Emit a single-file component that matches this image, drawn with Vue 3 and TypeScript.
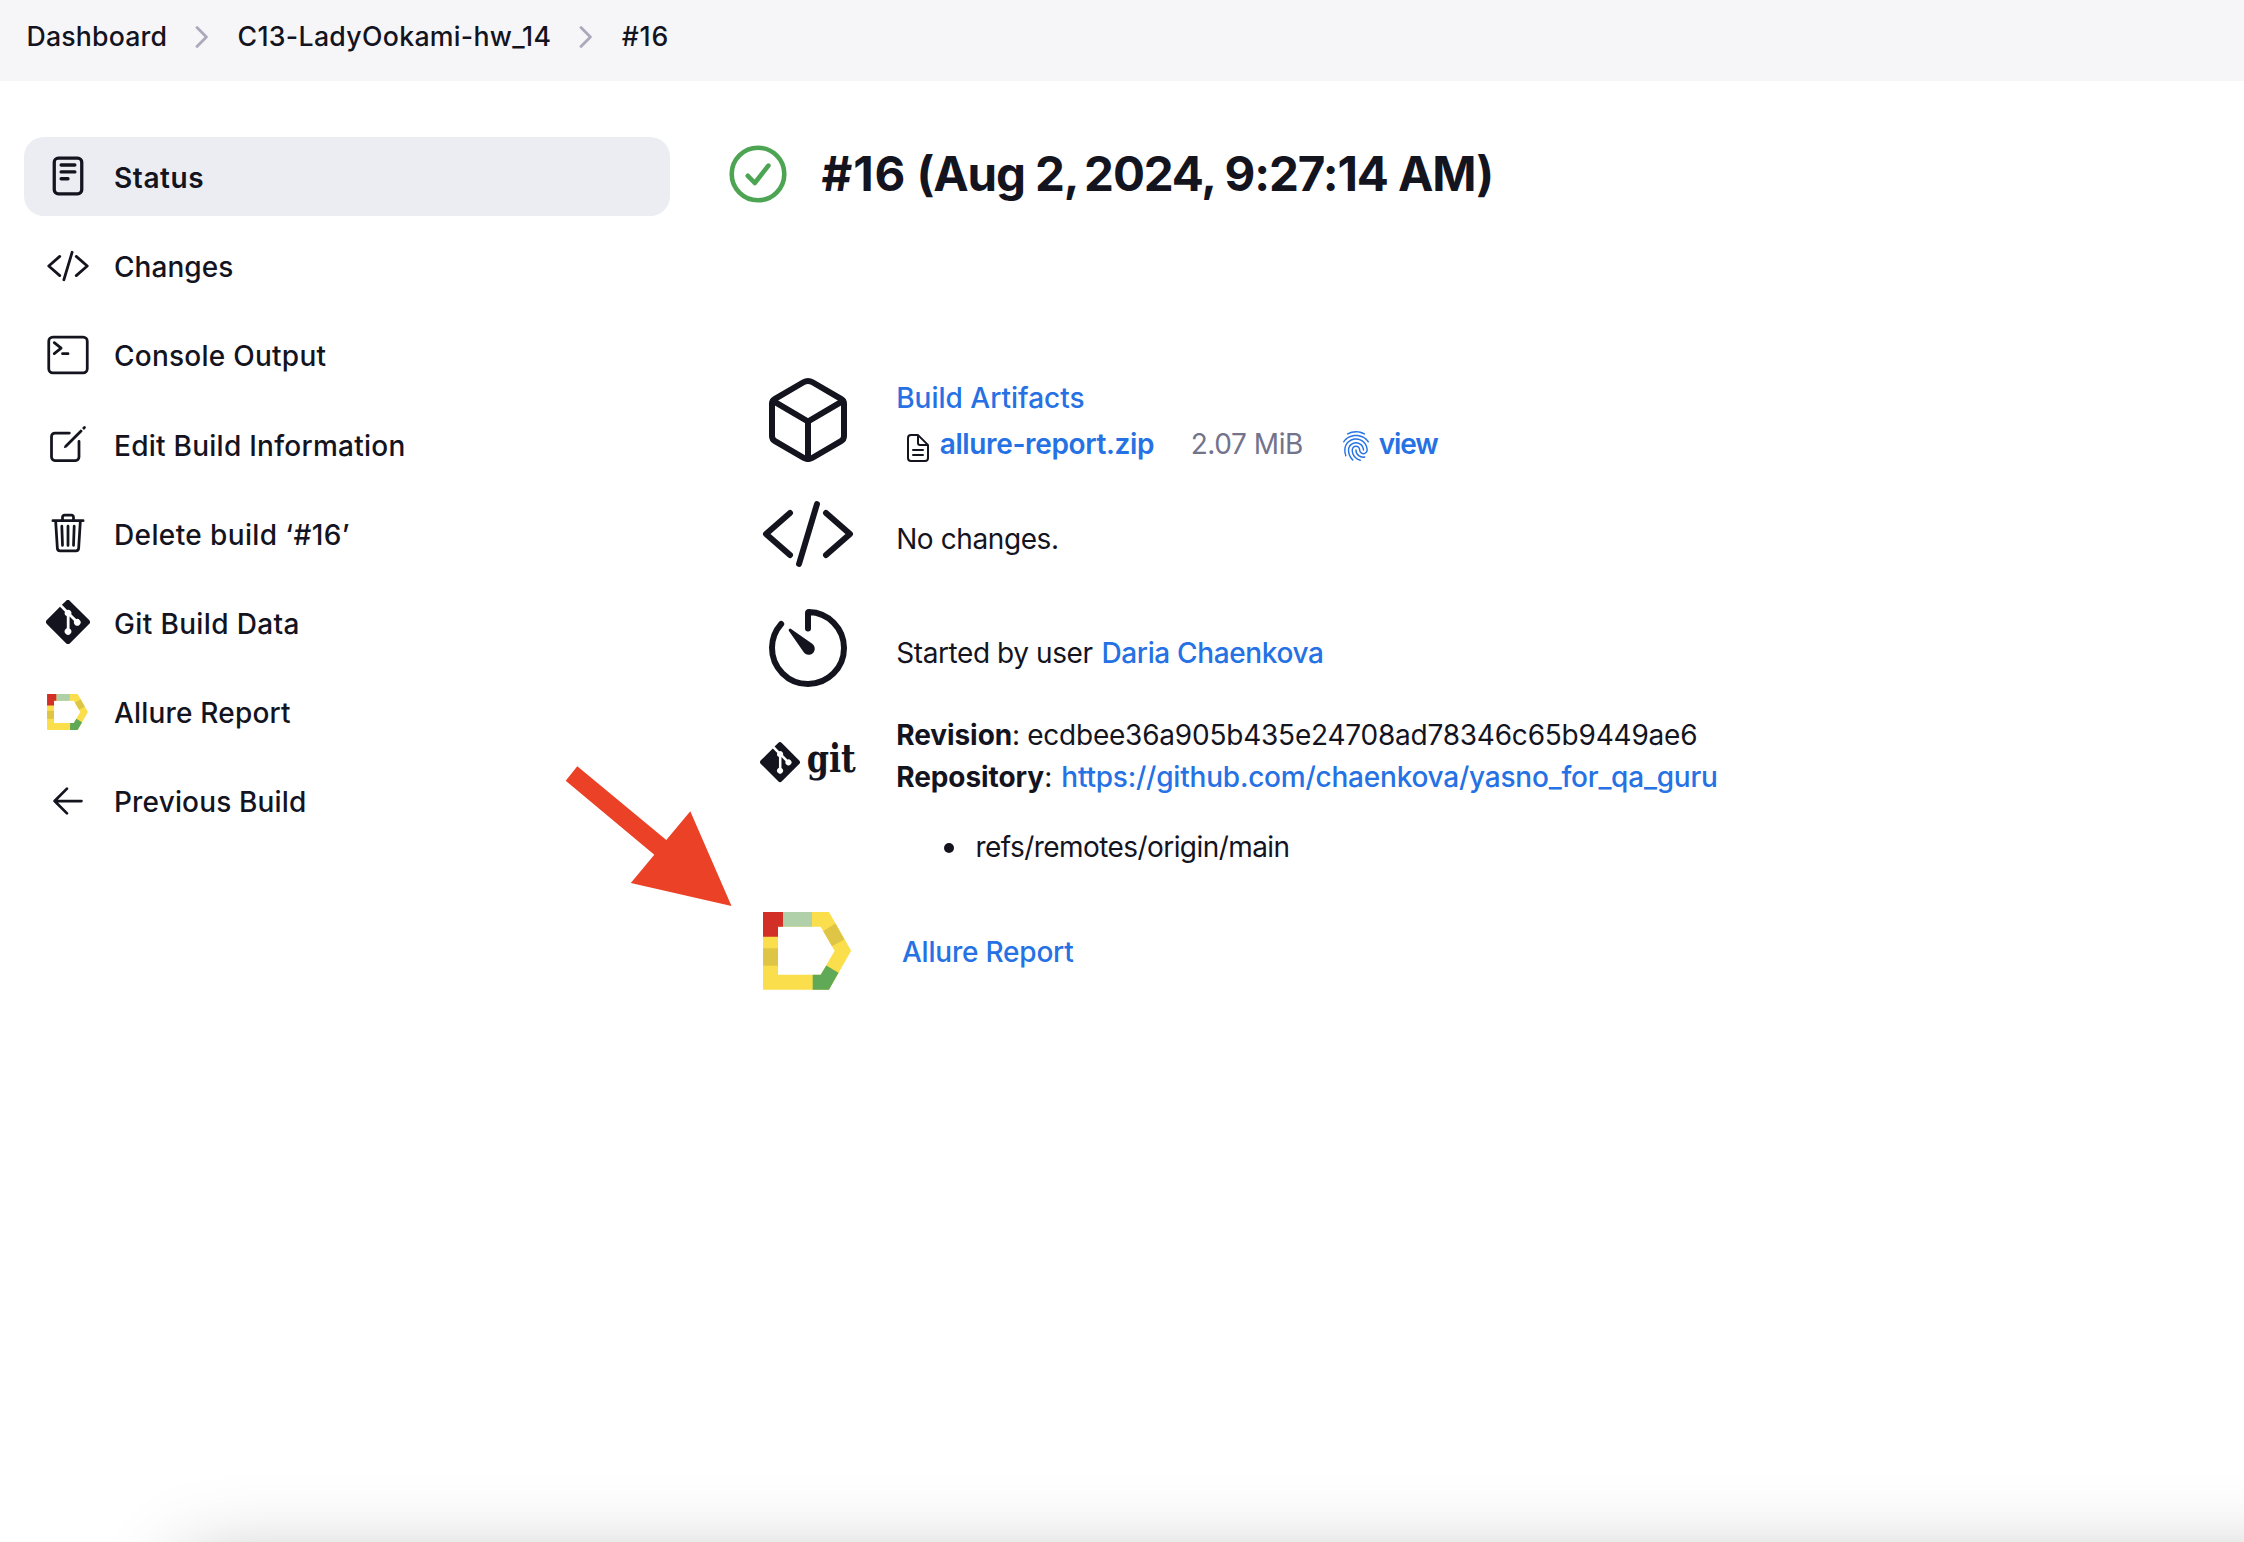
<script setup lang="ts">
interface Crumb {
  label: string
  spacing: number
}

interface Task {
  id: string
  label: string
  spacing: number
  active?: boolean
}

const crumbs: Crumb[] = [
  { label: 'Dashboard', spacing: 0.16 },
  { label: 'C13-LadyOokami-hw_14', spacing: 0.3 },
  { label: '#16', spacing: 0.9 },
]

const tasks: Task[] = [
  { id: 'status', label: 'Status', spacing: 0.6, active: true },
  { id: 'changes', label: 'Changes', spacing: 0.06 },
  { id: 'console', label: 'Console Output', spacing: 0.25 },
  { id: 'edit', label: 'Edit Build Information', spacing: 0.26 },
  { id: 'delete', label: 'Delete build ‘#16’', spacing: 0.38 },
  { id: 'git', label: 'Git Build Data', spacing: 0.36 },
  { id: 'allure', label: 'Allure Report', spacing: 0.19 },
  { id: 'previous', label: 'Previous Build', spacing: 0.16 },
]

const gitMark =
  'M90.156 41.965 50.036 1.848a5.918 5.918 0 0 0-8.372 0l-8.328 8.332 10.566 10.566a7.03 7.03 0 0 1 7.23 1.684 7.034 7.034 0 0 1 1.669 7.277l10.187 10.184a7.028 7.028 0 0 1 7.278 1.672 7.04 7.04 0 0 1 0 9.957 7.05 7.05 0 0 1-9.965 0 7.044 7.044 0 0 1-1.528-7.66l-9.5-9.497V59.36a7.04 7.04 0 0 1 1.86 11.29 7.04 7.04 0 0 1-9.957 0 7.04 7.04 0 0 1 0-9.958 7.06 7.06 0 0 1 2.304-1.539V33.926a7.049 7.049 0 0 1-3.82-9.234L29.242 14.272 1.73 41.777a5.918 5.918 0 0 0 0 8.371L41.852 90.27a5.92 5.92 0 0 0 8.37 0l39.934-39.934a5.925 5.925 0 0 0 0-8.371'

const allureParts = [
  { points: '0,0 66,0 88.2,38.8 66,77.7 0,77.7 0,62.7 57.7,62.7 71.7,38.8 57.7,14.7 15,14.7 15,77.7 0,77.7', fill: '#fbde4b' },
  { points: '20,0 49,0 49,14.7 20,14.7', fill: '#b0d0a9' },
  { points: '0,0 20,0 20,14.7 15,14.7 15,24.7 0,24.7', fill: '#d22f27' },
  { points: '0,36.3 15,36.3 15,53.7 0,53.7', fill: '#dfc545' },
  { points: '72.5,11.5 81.5,27.5 69,34.2 60.2,19', fill: '#dfc545' },
  { points: '49.7,62.7 57.7,62.7 63.3,53.5 75.5,60.8 66,77.7 49.7,77.7', fill: '#60a957' },
]
</script>

<template>
  <div class="page">
    <nav class="breadcrumbs">
      <template v-for="(crumb, i) in crumbs" :key="crumb.label">
        <svg v-if="i > 0" class="chevron" viewBox="0 0 14 22">
          <path d="M2 1.6 L11.4 11 L2 20.4" />
        </svg>
        <a class="crumb" :style="{ letterSpacing: crumb.spacing + 'px' }">{{ crumb.label }}</a>
      </template>
    </nav>

    <div class="body">
      <aside class="tasks">
        <a v-for="task in tasks" :key="task.id" class="task" :class="{ active: task.active }">
          <svg v-if="task.id === 'git'" class="task-icon" viewBox="0 0 92 92">
            <path class="solid" :d="gitMark" />
          </svg>
          <svg v-else-if="task.id === 'allure'" class="task-icon allure-small" viewBox="0 0 88.2 77.7">
            <polygon v-for="(p, i) in allureParts" :key="i" :points="p.points" :fill="p.fill" />
          </svg>
          <svg v-else class="task-icon line" viewBox="0 0 512 512">
            <template v-if="task.id === 'status'">
              <rect x="96" y="48" width="320" height="416" rx="48" />
              <path d="M176 128h160M176 208h160M176 288h80" />
            </template>
            <path v-else-if="task.id === 'changes'" d="M160 368L32 256l128-112M352 368l128-112-128-112M304 96l-96 320" />
            <template v-else-if="task.id === 'console'">
              <rect x="32" y="48" width="448" height="416" rx="48" />
              <path d="M96 112l80 64-80 64M192 240h64" />
            </template>
            <template v-else-if="task.id === 'edit'">
              <path d="M384 224v184a40 40 0 01-40 40H104a40 40 0 01-40-40V168a40 40 0 0140-40h167.48" />
              <path
                class="solid"
                d="M459.94 53.25a16.06 16.06 0 00-23.22-.56L424.35 65a8 8 0 000 11.31l11.34 11.32a8 8 0 0011.34 0l12.06-12c6.1-6.09 6.67-16.01.85-22.38zM399.34 90L218.82 270.2a9 9 0 00-2.31 3.93L208.16 299a3.91 3.91 0 004.86 4.86l24.85-8.35a9 9 0 003.93-2.31L422 112.66a9 9 0 000-12.66l-9.95-10a9 9 0 00-12.71 0z"
              />
            </template>
            <path
              v-else-if="task.id === 'delete'"
              d="M112 112l20 320c.95 18.49 14.4 32 32 32h184c17.67 0 30.87-13.51 32-32l20-320M80 112h352M192 112V72h0a23.93 23.93 0 0124-24h80a23.93 23.93 0 0124 24h0v40M256 176v224M184 176l8 224M328 176l-8 224"
            />
            <path v-else d="M244 400L100 256l144-144M120 256h292" />
          </svg>
          <span :style="{ letterSpacing: task.spacing + 'px' }">{{ task.label }}</span>
        </a>
      </aside>

      <main class="main">
        <header class="heading">
          <svg class="result" viewBox="0 0 58 58">
            <circle cx="29" cy="29" r="26.3" />
            <path d="M18.8 30.8 L25.8 38 L39.4 20.6" />
          </svg>
          <h1><span class="build-number">#16</span> (Aug <span class="day">2,</span> 2024, 9:27:14 AM)</h1>
        </header>

        <section class="row artifacts">
          <svg class="row-icon line" viewBox="0 0 512 512">
            <path
              d="M448 341.37V170.61A32 32 0 00432.11 143l-152-88.46a47.94 47.94 0 00-48.24 0L79.89 143A32 32 0 0064 170.61v170.76A32 32 0 0079.89 369l152 88.46a48 48 0 0048.24 0l152-88.46A32 32 0 00448 341.37z"
            />
            <path d="M69 153.99l187 110 187-110M256 463.99v-200" />
          </svg>
          <div class="cell">
            <a class="link">Build Artifacts</a>
            <div class="file">
              <svg class="file-icon line" viewBox="0 0 512 512">
                <path
                  d="M416 221.25V416a48 48 0 01-48 48H144a48 48 0 01-48-48V96a48 48 0 0148-48h98.75a32 32 0 0122.62 9.37l141.26 141.26a32 32 0 019.37 22.62z"
                />
                <path d="M256 56v120a32 32 0 0032 32h120M176 288h160M176 368h160" />
              </svg>
              <a class="link strong file-name">allure-report.zip</a>
              <span class="size">2.07 MiB</span>
              <svg class="print-icon" viewBox="0 0 512 512">
                <path
                  d="M390.42 75.28a10.45 10.45 0 01-5.32-1.44C340.72 50.08 302.35 40 256.35 40c-45.77 0-89.23 11.28-128.76 33.84C122 77 115.11 74.8 111.87 69a12.4 12.4 0 014.63-16.32A281.81 281.81 0 01256.35 16c49.23 0 92.23 11.28 139.39 36.48a12 12 0 014.85 16.08 11.3 11.3 0 01-10.17 6.72zm-330.79 126a11.73 11.73 0 01-6.7-2.16 12.26 12.26 0 01-2.78-16.8c22.89-33.6 52-60 86.69-78.48 72.58-38.88 165.51-39.12 238.32-.24 34.68 18.48 63.8 44.64 86.69 78a12.29 12.29 0 01-2.78 16.8 11.26 11.26 0 01-16.18-2.88c-20.8-30.24-47.16-54-78.36-70.56-66.34-35.28-151.18-35.28-217.29.24-31.44 16.8-57.79 40.8-78.59 71a10 10 0 01-9.02 5.08zM204.1 491a10.66 10.66 0 01-8.09-3.6C175.9 466.48 165 453 149.55 424c-16-29.52-24.27-65.52-24.27-104.16 0-71.28 58.71-129.36 130.84-129.36S387 248.56 387 319.84a11.56 11.56 0 11-23.11 0c0-58.08-48.32-105.36-107.72-105.36S148.4 261.76 148.4 319.84c0 34.56 7.4 66.48 21.49 92.4 14.8 27.6 25 39.36 42.77 58.08a12.67 12.67 0 010 17 12.44 12.44 0 01-8.56 3.68zm165.75-44.4c-27.51 0-51.78-7.2-71.66-21.36a129.1 129.1 0 01-55-105.36 11.57 11.57 0 1123.12 0 104.28 104.28 0 0044.84 85.44c16.41 11.52 35.6 17 58.72 17a147.41 147.41 0 0024-2.4c6.24-1.2 12.25 3.12 13.4 9.84a11.92 11.92 0 01-9.47 13.92 152.28 152.28 0 01-27.95 2.88zM323.38 496a13 13 0 01-3-.48c-36.76-10.56-60.8-24.72-86-50.4-32.37-33.36-50.16-77.76-50.16-125.28 0-38.88 31.9-70.56 71.19-70.56s71.2 31.68 71.2 70.56c0 25.68 21.5 46.56 48.08 46.56s48.08-20.88 48.08-46.56c0-90.48-75.13-163.92-167.59-163.92-65.65 0-125.75 37.92-152.79 96.72-9 19.44-13.64 42.24-13.64 67.2 0 18.72 1.61 48.24 15.48 86.64 2.32 6.24-.69 13.2-6.7 15.36a11.34 11.34 0 01-14.79-7 276.39 276.39 0 01-16.88-95c0-28.8 5.32-55 15.72-77.76 30.75-67 98.94-110.4 173.6-110.4 105.18 0 190.71 84.24 190.71 187.92 0 38.88-31.9 70.56-71.2 70.56s-71.2-31.68-71.2-70.56c.01-25.68-21.49-46.6-48.07-46.6s-48.08 20.88-48.08 46.56c0 41 15.26 79.44 43.23 108.24 22 22.56 43 35 75.59 44.16 6.24 1.68 9.71 8.4 8.09 14.64a11.39 11.39 0 01-10.87 9.36z"
                />
              </svg>
              <a class="link strong view">view</a>
            </div>
          </div>
        </section>

        <section class="row changes">
          <svg class="row-icon line" viewBox="0 0 512 512">
            <path d="M160 368L32 256l128-112M352 368l128-112-128-112M304 96l-96 320" />
          </svg>
          <div class="cell plain">No changes.</div>
        </section>

        <section class="row cause">
          <svg class="row-icon line" viewBox="0 0 512 512">
            <path
              d="M112.91 128A191.85 191.85 0 0064 254c-1.18 106.35 85.65 193.8 192 194 106.2.2 192-85.83 192-192 0-104.54-83.55-189.61-187.5-192a4.36 4.36 0 00-4.5 4.37V152"
            />
            <path
              class="solid"
              d="M233.38 278.63l-79-113a8.13 8.13 0 0111.32-11.32l113 79a32.5 32.5 0 01-37.25 53.26 33.21 33.21 0 01-8.07-7.94z"
            />
          </svg>
          <div class="cell"><span class="plain">Started by user</span><a class="link user">Daria Chaenkova</a></div>
        </section>

        <section class="row scm">
          <svg class="git-logo" viewBox="0 0 120 72">
            <g transform="translate(0.1 12.2) scale(0.4337)"><path class="solid" :d="gitMark" /></g>
            <text x="46.8" y="41.7" textLength="49" lengthAdjust="spacingAndGlyphs">git</text>
          </svg>
          <div class="cell">
            <div class="line-text revision"><b>Revision</b>: <span class="hash">ecdbee36a905b435e24708ad78346c65b9449ae6</span></div>
            <div class="line-text"><b>Repository</b>: <a class="link url">https://github.com/chaenkova/yasno_for_qa_guru</a></div>
            <ul>
              <li>refs/remotes/origin/main</li>
            </ul>
          </div>
        </section>

        <section class="row report">
          <svg class="allure-large" viewBox="0 0 88.2 77.7">
            <polygon v-for="(p, i) in allureParts" :key="i" :points="p.points" :fill="p.fill" />
          </svg>
          <a class="link report-link">Allure Report</a>
        </section>
      </main>
    </div>

    <svg class="pointer" viewBox="0 0 170 144">
      <polygon points="14.3,2.3 103.3,76 127.3,47.3 168.5,142 67.8,119 91.3,90.7 2.7,16.7" />
    </svg>
    <div class="edge-shadow"></div>
  </div>
</template>

<style>
body {
  margin: 0;
  background: #fff;
}
</style>

<style scoped>
.page {
  position: relative;
  width: 2244px;
  height: 1542px;
  overflow: hidden;
  background: #fff;
  color: #14141f;
  font-family: Inter, 'Liberation Sans', sans-serif;
  font-size: 28px;
  line-height: 40px;
  white-space: nowrap;
}

.line path,
.line rect {
  fill: none;
  stroke: #14141f;
  stroke-width: 32;
  stroke-linecap: round;
  stroke-linejoin: round;
}

.solid,
.line path.solid {
  fill: #14141f;
  stroke: none;
}

.breadcrumbs {
  display: flex;
  align-items: center;
  box-sizing: border-box;
  height: 81px;
  padding: 0 0 9px 26.6px;
  background: #f6f6f9;
}

.crumb {
  font-size: 26.7px;
  font-weight: 500;
}

.chevron {
  width: 14px;
  height: 22px;
  margin: 1px 28.2px 0 28.2px;
}

.chevron path {
  fill: none;
  stroke: #a9a9bb;
  stroke-width: 2.8;
  stroke-linecap: round;
  stroke-linejoin: round;
}

.body {
  display: flex;
}

.tasks {
  display: flex;
  flex-direction: column;
  gap: 10.2px;
  width: 646px;
  padding: 56px 0 0 24px;
}

.task {
  display: flex;
  align-items: center;
  box-sizing: border-box;
  height: 79px;
  padding: 0 22px;
  border-radius: 20px;
  font-weight: 500;
}

.task.active {
  background: #ecedf3;
  font-weight: 600;
}

.task.active .task-icon {
  margin-bottom: 1px;
}

.task.active .line path,
.task.active .line rect {
  stroke-width: 38;
}

.task-icon {
  width: 44px;
  height: 44px;
  margin-right: 24px;
}

.task-icon.allure-small {
  width: 41px;
  height: 36px;
  margin: 0 26px 0 1px;
}

.task span {
  padding-top: 3px;
}

.main {
  padding: 62px 0 0 58px;
}

.heading {
  display: flex;
  align-items: center;
  gap: 34.5px;
  height: 62px;
}

.result {
  width: 58px;
  height: 58px;
  margin-left: 1px;
}

.result circle,
.result path {
  fill: none;
  stroke: #4da553;
  stroke-width: 4.6;
  stroke-linecap: round;
  stroke-linejoin: round;
}

h1 {
  margin: 0;
  font-size: 47.5px;
  line-height: 62px;
  font-weight: 700;
  letter-spacing: -1.13px;
}

.build-number {
  letter-spacing: 0.9px;
}

.day {
  margin-right: -4.6px;
}

.row {
  display: flex;
  align-items: flex-start;
  padding-left: 32px;
}

.row-icon {
  width: 96px;
  height: 96px;
}

.cell {
  padding-left: 40.2px;
}

.link {
  color: #2671e3;
  font-weight: 540;
}

.strong {
  font-weight: 600;
}

.artifacts {
  margin-top: 167px;
  height: 114px;
}

.artifacts .cell {
  padding-top: 6px;
}

.file {
  display: flex;
  align-items: center;
  margin-top: 5.5px;
}

.file-icon {
  width: 32px;
  height: 32px;
  margin: 8px 5.7px 0 5.8px;
}

.file-name {
  width: 251px;
  letter-spacing: -0.36px;
}

.size {
  width: 149.5px;
  color: #73738c;
  letter-spacing: -0.42px;
}

.print-icon {
  width: 32px;
  height: 32px;
  margin-right: 6.5px;
  margin-top: 4px;
}

.print-icon path {
  fill: #2671e3;
}

.view {
  letter-spacing: -1.1px;
}

.changes,
.cause {
  height: 114px;
}

.changes .cell {
  padding-top: 33px;
}

.cause .cell {
  padding-top: 33px;
}

.plain {
  letter-spacing: -0.41px;
}

.user {
  margin-left: 8.8px;
  letter-spacing: -0.36px;
}

.scm {
  height: 198px;
}

.git-logo {
  width: 120px;
  height: 72px;
  margin: 16px -24px 0 0;
}

.git-logo text {
  fill: #14141f;
  font-family: 'DejaVu Serif', serif;
  font-size: 39px;
  font-weight: 700;
}

.line-text {
  height: 42px;
}

.line-text b {
  letter-spacing: -0.07px;
}

.hash {
  margin-left: -0.9px;
  letter-spacing: -0.22px;
}

.url {
  margin-left: 1.2px;
  letter-spacing: -0.22px;
}

ul {
  margin: 28px 0 0;
  padding: 0;
  list-style: none;
}

li {
  display: flex;
  align-items: center;
  letter-spacing: -0.56px;
}

li::before {
  content: '';
  width: 10px;
  height: 10px;
  margin: 2px 21.5px 0 47.8px;
  border-radius: 50%;
  background: #14141f;
}

.scm .cell {
  padding-top: 1px;
}

.report {
  padding-left: 35.3px;
}

.allure-large {
  width: 88.2px;
  height: 77.7px;
}

.report-link {
  margin: 19.5px 0 0 50.4px;
  letter-spacing: -0.2px;
}

.pointer {
  position: absolute;
  left: 563px;
  top: 764px;
  width: 170px;
  height: 144px;
}

.pointer polygon {
  fill: #eb4127;
}

.edge-shadow {
  position: absolute;
  left: 184px;
  top: 1565px;
  width: 2400px;
  height: 600px;
  box-shadow: 0 0 78px rgba(0, 0, 0, 0.29);
}
</style>
